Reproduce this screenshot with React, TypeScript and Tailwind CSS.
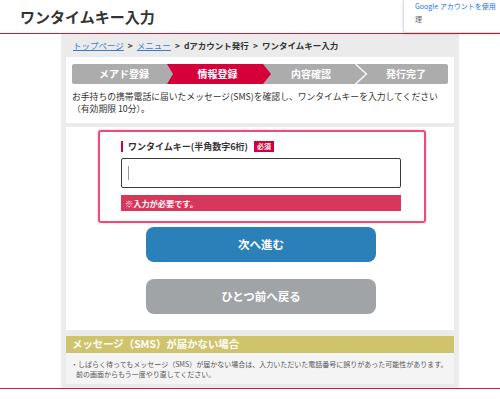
import React from "react";

const jp = { fontFamily: '"Noto Sans CJK JP", "Noto Sans", sans-serif' };

export default function App() {
  return (
    <div className="relative w-[500px] h-[399px] bg-white overflow-hidden" style={jp}>
      {/* header */}
      <div className="h-[34px] flex items-center pl-[20px] border-b border-[#d4173f]">
        <h1 className="text-[15px] leading-none font-bold text-[#333] tracking-[0px]">ワンタイムキー入力</h1>
      </div>

      {/* main gray container */}
      <div className="ml-[61px] w-[398px] h-[354px] bg-[#ebebeb] px-[5px] flex flex-col">
        {/* breadcrumb */}
        <div className="h-[23px] flex items-center pl-[7px] text-[8.5px] leading-none text-[#333] font-bold whitespace-nowrap">
          <span className="text-[#3b7dc4] underline font-normal">トップページ</span>
          <span className="mx-[4px]">&gt;</span>
          <span className="text-[#3b7dc4] underline font-normal">メニュー</span>
          <span className="mx-[4px]">&gt;</span>
          <span>dアカウント発行</span>
          <span className="mx-[4px]">&gt;</span>
          <span>ワンタイムキー入力</span>
        </div>

        {/* panel 1 */}
        <div className="h-[66px] bg-white px-[6px] pt-[7px]">
          <div className="h-[20px] flex bg-[#acacac] rounded-[2px] text-white font-bold text-[10px] leading-none">
            <div className="w-[95px] flex items-center justify-center pl-[9px]">メアド登録</div>
            <div className="w-[104px] -mr-[8px] relative z-10 flex items-center justify-center pr-[3px] bg-[#d5003a] [clip-path:polygon(0_0,calc(100%_-_8px)_0,100%_50%,calc(100%_-_8px)_100%,0_100%,6px_50%)]">
              情報登録
            </div>
            <div className="w-[92px] flex items-center justify-center pl-[4px]">内容確認</div>
            <svg width="13" height="20" viewBox="0 0 13 20" className="shrink-0">
              <polyline points="0.5,0 11.5,10 0.5,20" fill="none" stroke="#ffffff" strokeWidth="1.3" />
            </svg>
            <div className="flex-1 flex items-center justify-center pr-[4px]">発行完了</div>
          </div>
          <div className="mt-[7px] text-[8.8px] text-[#333] whitespace-nowrap">
            <div className="h-[13px] flex items-center leading-none">
              お手持ちの携帯電話に届いたメッセージ(SMS)を確認し、ワンタイムキーを入力してください
            </div>
            <div className="h-[13px] -mt-[1px] flex items-center leading-none">（有効期限 10分）。</div>
          </div>
        </div>

        {/* panel 2 */}
        <div className="mt-[4px] h-[203px] bg-white pt-[3px] flex flex-col">
          <div className="ml-[32px] w-[328px] h-[93px] border-2 border-[#ec4b7b] rounded-[3px] shadow-[0_0_2px_rgba(236,75,123,0.5)] pt-[8px] pl-[21px] pr-[23px]">
            <div className="flex items-center h-[12px]">
              <span className="w-[2px] h-[11px] bg-[#d5003a] mr-[5px]" />
              <span className="text-[9px] leading-none font-bold text-[#333]">ワンタイムキー(半角数字6桁)</span>
              <span className="ml-[6px] h-[11px] px-[3px] bg-[#d5003a] text-white text-[7px] leading-none font-bold flex items-center">必須</span>
            </div>
            <div className="mt-[6px] h-[30px] border-[1.5px] border-[#3a3a3a] rounded-[2px] flex items-center pl-[6px]">
              <span className="w-[1px] h-[14px] bg-[#999]" />
            </div>
            <div className="mt-[7px] h-[16px] bg-[#d8375c] flex items-center pl-[4px] text-[8.2px] leading-none font-bold text-white">
              ※入力が必要です。
            </div>
          </div>

          <div className="mt-[4px] ml-[80px] w-[230px] h-[35px] rounded-[8px] bg-[#2b80b9] flex items-center justify-center text-white text-[11.5px] font-bold leading-none">
            次へ進む
          </div>
          <div className="mt-[17px] ml-[80px] w-[230px] h-[35px] rounded-[8px] bg-[#a0a4a7] flex items-center justify-center text-white text-[11.5px] font-bold leading-none">
            ひとつ前へ戻る
          </div>
        </div>

        {/* SMS not arriving */}
        <div className="mt-[6px] h-[17px] bg-[#cfc46c] flex items-center pl-[6px] text-[10.4px] leading-none font-bold text-white whitespace-nowrap">
          メッセージ（SMS）が届かない場合
        </div>
        <div className="h-[31px] bg-[#f4f4f4] pt-[6px] pl-[5px] text-[7px] text-[#555] whitespace-nowrap">
          <div className="h-[10px] flex items-center leading-none">
            ・しばらく待ってもメッセージ（SMS）が届かない場合は、入力いただいた電話番号に誤りがあった可能性があります。
          </div>
          <div className="h-[10px] flex items-center leading-none pl-[5px]">前の画面からもう一度やり直してください。</div>
        </div>
      </div>

      {/* bottom red line */}
      <div className="h-[1px] bg-[#d4173f]" />

      {/* google popup */}
      <div className="absolute top-0 right-0 w-[97px] h-[33px] bg-white border-l border-b border-[#dadce0] rounded-bl-[3px] shadow-[0_1px_3px_rgba(0,0,0,0.15)] pl-[11px] pt-[2px] whitespace-nowrap overflow-hidden">
        <div className="text-[7px] leading-[9px] text-[#1a73e8]" style={{ fontFamily: '"Noto Sans CJK JP", Roboto, sans-serif' }}>
          Google アカウントを使用
        </div>
        <div className="mt-[4px] text-[7px] leading-[9px] text-[#5f6368]">理</div>
      </div>
    </div>
  );
}
